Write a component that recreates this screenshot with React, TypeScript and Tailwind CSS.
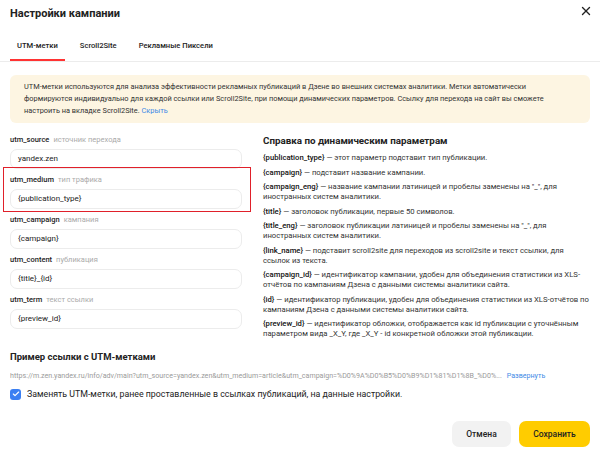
import { X, Check } from "lucide-react"

const FIELDS = [
  { name: "utm_source", hint: "источник перехода", value: "yandex.zen" },
  { name: "utm_medium", hint: "тип трафика", value: "{publication_type}", marked: true },
  { name: "utm_campaign", hint: "кампания", value: "{campaign}" },
  { name: "utm_content", hint: "публикация", value: "{title}_{id}" },
  { name: "utm_term", hint: "текст ссылки", value: "{preview_id}" },
]

const PARAMS = [
  { key: "{publication_type}", text: "этот параметр подставит тип публикации." },
  { key: "{campaign}", text: "подставит название кампании." },
  {
    key: "{campaign_eng}",
    text: "название кампании латиницей и пробелы заменены на \"_\", для иностранных систем аналитики.",
  },
  { key: "{title}", text: "заголовок публикации, первые 50 символов." },
  {
    key: "{title_eng}",
    text: "заголовок публикации латиницей и пробелы заменены на \"_\", для иностранных систем аналитики.",
  },
  {
    key: "{link_name}",
    text: "подставит scroll2site для переходов из scroll2site и текст ссылки, для ссылок из текста.",
  },
  {
    key: "{campaign_id}",
    text: "идентификатор кампании, удобен для объединения статистики из XLS-отчётов по кампаниям Дзена с данными системы аналитики сайта.",
  },
  {
    key: "{id}",
    text: "идентификатор публикации, удобен для объединения статистики из XLS-отчётов по кампаниям Дзена с данными системы аналитики сайта.",
  },
  {
    key: "{preview_id}",
    text: "идентификатор обложки, отображается как id публикации с уточнённым параметром вида _X_Y, где _X_Y - id конкретной обложки этой публикации.",
  },
]

const TABS = ["UTM-метки", "Scroll2Site", "Рекламные Пиксели"]

export default function App() {
  return (
    <div className="w-[600px] h-[455px] bg-white text-[#222] font-['Roboto','Liberation_Sans',sans-serif] overflow-hidden">
      {/* Header */}
      <div className="flex items-start justify-between pl-[10px] pr-[7px] pt-[5px]">
        <h2 className="text-[11px] leading-[18px] font-bold">Настройки кампании</h2>
        <button className="mt-[-1px] text-[#222]">
          <X className="h-[14px] w-[14px]" strokeWidth={2.4} />
        </button>
      </div>

      {/* Tabs */}
      <div className="mt-[9px] flex border-b border-[#ececec] pl-[10px]">
        {TABS.map((tab, i) => (
          <div
            key={tab}
            className={`h-[29px] flex items-center px-[7px] mr-[8px] text-[7.6px] font-medium border-b-2 ${
              i === 0 ? "border-[#ff3333]" : "border-transparent"
            }`}
          >
            {tab}
          </div>
        ))}
      </div>

      {/* Info */}
      <div className="mx-[10px] mt-[13px] rounded-[6px] bg-[#fdf5e2] px-[14px] py-[6px] text-[7.4px] leading-[12px] text-[#333]">
        UTM-метки используются для анализа эффективности рекламных публикаций в Дзене во внешних системах аналитики. Метки автоматически
        <br />
        формируются индивидуально для каждой ссылки или Scroll2Site, при помощи динамических параметров. Ссылку для перехода на сайт вы сможете
        <br />
        настроить на вкладке Scroll2Site. <span className="text-[#3f8ae6]">Скрыть</span>
      </div>

      {/* Fields + help */}
      <div className="mt-[11px] grid grid-cols-[232px_1fr] gap-x-[21px] px-[10px]">
        <div className="flex flex-col gap-[5px]">
          {FIELDS.map((f) => (
            <div key={f.name} className="relative">
              <div className="flex items-baseline gap-[4px] h-[12px] text-[7.5px] leading-[12px]">
                <span className="font-medium text-[#222]">{f.name}</span>
                <span className="text-[#aaaaaa]">{f.hint}</span>
              </div>
              <div className="mt-[3px] h-[20px] rounded-[7px] border border-[#ececec] px-[7px] flex items-center text-[8px] text-[#222]">
                {f.value}
              </div>
              {f.marked && (
                <div className="absolute left-[-7px] right-[-9px] top-[-7px] bottom-[-3px] border border-[#e0202a]" />
              )}
            </div>
          ))}
        </div>

        <div>
          <h3 className="text-[9.8px] leading-[14px] font-bold mb-[5px]">Справка по динамическим параметрам</h3>
          <div className="flex flex-col gap-[4.5px] text-[7.7px] leading-[10px] text-[#333]">
            {PARAMS.map((p) => (
              <p key={p.key}>
                <span className="text-[#111] font-medium">{p.key}</span> — {p.text}
              </p>
            ))}
          </div>
        </div>
      </div>

      {/* Example link */}
      <div className="px-[10px] mt-[11px]">
        <h3 className="text-[9.5px] leading-[14px] font-bold">Пример ссылки с UTM-метками</h3>
        <div className="mt-[7px] flex items-center text-[7.1px] leading-[10px]">
          <span className="text-[#9a9a9a] truncate">
            https://m.zen.yandex.ru/info/adv/main?utm_source=yandex.zen&amp;utm_medium=article&amp;utm_campaign=%D0%9A%D0%B5%D0%B9%D1%81%D1%8B_%D0%...
          </span>
          <span className="text-[#3f8ae6] ml-[5px] shrink-0">Развернуть</span>
        </div>
        <label className="mt-[7px] flex items-center gap-[6px] text-[8.8px] leading-[12px]">
          <span className="h-[11px] w-[11px] rounded-[3px] bg-[#3b7ff2] flex items-center justify-center">
            <Check className="h-[8px] w-[8px] text-white" strokeWidth={3.5} />
          </span>
          Заменять UTM-метки, ранее проставленные в ссылках публикаций, на данные настройки.
        </label>
      </div>

      {/* Actions */}
      <div className="mt-[21px] flex justify-end gap-[8px] px-[10px]">
        <button className="h-[26px] w-[59px] rounded-[7px] bg-[#f2f2f2] text-[8.5px] font-medium">Отмена</button>
        <button className="h-[26px] w-[71px] rounded-[7px] bg-[#ffcc00] text-[8.5px] font-medium">Сохранить</button>
      </div>
    </div>
  )
}
